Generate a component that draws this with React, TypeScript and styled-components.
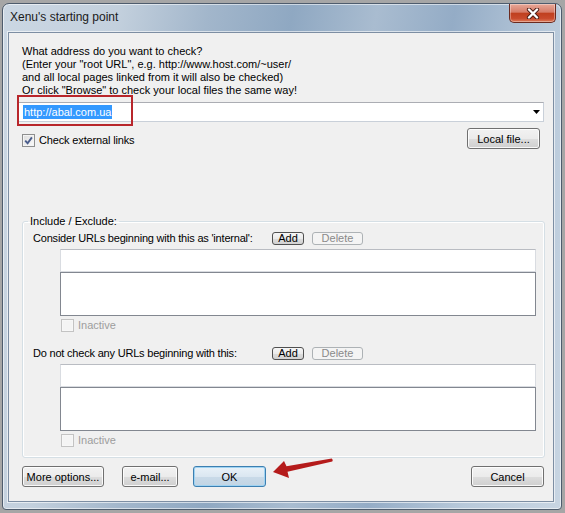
import React from "react";
import styled, { createGlobalStyle } from "styled-components";

const GlobalStyle = createGlobalStyle`
	html, body {
		margin: 0;
		padding: 0;
	}
	body {
		background: #a6a6a6;
		font-family: "Liberation Sans", Arial, sans-serif;
		font-size: 11px;
		color: #000;
	}
`;

const CheckMark = () => (
	<svg width="9" height="9" viewBox="0 0 9 9">
		<path d="M1.2 4.6 L3.6 7.2 L7.9 1.4" fill="none" stroke="#4a5d8c" strokeWidth="1.9" />
	</svg>
);

const Section = ({ label, first }: { label: string; first?: boolean }) => (
	<SectionBox $first={first}>
		<SectionHead>
			<span>{label}</span>
			<SmallButton>Add</SmallButton>
			<SmallButton $disabled>Delete</SmallButton>
		</SectionHead>
		<EntryInput />
		<EntryList />
		<InactiveRow>
			<CheckBox $disabled />
			<InactiveText>Inactive</InactiveText>
		</InactiveRow>
	</SectionBox>
);

const App = () => {
	return (
		<>
			<GlobalStyle />
			<Window>
				<TitleBar>
					<Title>Xenu's starting point</Title>
					<CloseButton>
						<svg width="14" height="11" viewBox="0 0 14 11">
							<path d="M3 1.5 L11 9.5 M11 1.5 L3 9.5" stroke="#4a1c14" strokeWidth="4.2" strokeLinecap="round" />
							<path d="M3 1.5 L11 9.5 M11 1.5 L3 9.5" stroke="#fff" strokeWidth="2.4" strokeLinecap="round" />
						</svg>
					</CloseButton>
				</TitleBar>
				<Client>
					<Prompt>
						<div>What address do you want to check?</div>
						<div>(Enter your "root URL", e.g. http://www.host.com/~user/</div>
						<div>and all local pages linked from it will also be checked)</div>
						<div>Or click "Browse" to check your local files the same way!</div>
					</Prompt>
					<ComboWrap>
						<Combo>
							<Selected>http://abal.com.ua</Selected>
							<DropArrow width="7" height="4" viewBox="0 0 7 4">
								<path d="M0 0 H7 L3.5 4 Z" fill="#000" />
							</DropArrow>
						</Combo>
						<Annotation />
					</ComboWrap>
					<CheckRow>
						<CheckLabel>
							<CheckBox>
								<CheckMark />
							</CheckBox>
							Check external links
						</CheckLabel>
						<Button $w={73}>Local file...</Button>
					</CheckRow>
					<Group>
						<Legend>Include / Exclude:</Legend>
						<Section first label="Consider URLs beginning with this as 'internal':" />
						<Section label="Do not check any URLs beginning with this:" />
					</Group>
					<ButtonRow>
						<Button $w={82}>More options...</Button>
						<Button $w={56} $ml={18}>
							e-mail...
						</Button>
						<Button $w={73} $ml={15} $default>
							OK
						</Button>
						<Button $w={73} $ml="auto">
							Cancel
						</Button>
						<Arrow width="66" height="26" viewBox="0 0 66 26">
							<path
								d="M3 16 L14 5 L16.5 10.3 L61.7 2.5 Q63.6 4 62.3 5.6 L17.5 15.7 L19 22 Z"
								fill="#b51b1b"
							/>
						</Arrow>
					</ButtonRow>
				</Client>
			</Window>
		</>
	);
};

export default App;

const Window = styled.div`
	box-sizing: border-box;
	width: 560px;
	height: 507px;
	margin: 3px 0 0 2px;
	padding: 0 7px 7px 5px;
	display: flex;
	flex-direction: column;
	border: 1px solid #4e5c6d;
	border-radius: 7px 7px 4px 4px;
	background: linear-gradient(
		100deg,
		#cbd7e3 0%,
		#c3d0dd 18%,
		#a2b6cb 32%,
		#8fa8c2 45%,
		#a9bcd0 58%,
		#94acc6 70%,
		#b8c9da 85%,
		#c8d5e2 100%
	);
	box-shadow: inset 0 0 0 1px rgba(255, 255, 255, 0.55);
`;

const TitleBar = styled.div`
	height: 28px;
	flex: none;
	display: flex;
	justify-content: space-between;
	align-items: flex-start;
`;

const Title = styled.div`
	padding: 5px 0 0 2px;
	font-size: 12px;
	line-height: 16px;
	color: #1a1a1a;
`;

const CloseButton = styled.div`
	box-sizing: border-box;
	width: 47px;
	height: 19px;
	margin-right: -2px;
	display: flex;
	align-items: center;
	justify-content: center;
	border: 1px solid #6b2a1f;
	border-top: none;
	border-radius: 0 0 5px 5px;
	background: linear-gradient(#e8a898 0%, #d67c68 45%, #c0401f 52%, #c84a2c 80%, #de7c5b 100%);
	box-shadow: inset 0 0 0 1px rgba(255, 255, 255, 0.35);
`;

const Client = styled.div`
	flex: 1;
	display: flex;
	flex-direction: column;
	background: #f0f0f0;
	border: 1px solid #7d8ea3;
	box-shadow: 0 0 0 1px rgba(255, 255, 255, 0.6);
`;

const Prompt = styled.div`
	margin: 12px 0 0 13px;
	line-height: 13px;
`;

const ComboWrap = styled.div`
	position: relative;
	margin: 5px 9px 0 8px;
`;

const Combo = styled.div`
	box-sizing: border-box;
	height: 20px;
	display: flex;
	align-items: center;
	padding: 0 3px 0 5px;
	background: #fff;
	border: 1px solid #c9d0d9;
	border-top-color: #abadb3;
`;

const Selected = styled.span`
	background: #3399ff;
	color: #fff;
	padding: 0 1px;
	line-height: 14px;
`;

const DropArrow = styled.svg`
	margin-left: auto;
`;

const Annotation = styled.div`
	position: absolute;
	left: 0;
	top: -7px;
	width: 116px;
	height: 31px;
	box-sizing: border-box;
	border: 2px solid #b8262b;
`;

const CheckRow = styled.div`
	margin: 6px 13px 0 13px;
	height: 21px;
	display: flex;
	justify-content: space-between;
	align-items: flex-start;
`;

const CheckLabel = styled.div`
	display: flex;
	align-items: center;
	gap: 4px;
	margin-top: 6px;
	line-height: 13px;
	letter-spacing: -0.15px;
`;

const CheckBox = styled.span<{ $disabled?: boolean }>`
	box-sizing: border-box;
	width: 13px;
	height: 13px;
	flex: none;
	display: inline-flex;
	align-items: center;
	justify-content: center;
	border: 1px solid ${(p) => (p.$disabled ? "#c3c3c3" : "#8e8f8f")};
	background: ${(p) => (p.$disabled ? "#f4f4f4" : "linear-gradient(135deg, #dcdcdc, #fbfbfb)")};
	box-shadow: inset 0 0 0 1px ${(p) => (p.$disabled ? "#f7f7f7" : "#f4f4f4")};
`;

interface IButton {
	$w: number;
	$ml?: number | "auto";
	$default?: boolean;
}

const Button = styled.button<IButton>`
	box-sizing: border-box;
	width: ${(p) => p.$w}px;
	height: 21px;
	margin: 0 0 0 ${(p) => (p.$ml === "auto" ? "auto" : `${p.$ml || 0}px`)};
	padding: 0;
	font: inherit;
	font-size: 11px;
	color: #000;
	flex: none;
	display: flex;
	align-items: center;
	justify-content: center;
	border: 1px solid ${(p) => (p.$default ? "#3c7fb1" : "#707070")};
	border-radius: 3px;
	background: ${(p) =>
		p.$default
			? "linear-gradient(#e8f1f8 0%, #dbe7f1 50%, #c9dae8 51%, #c2d5e4 100%)"
			: "linear-gradient(#f2f2f2 0%, #ebebeb 50%, #dddddd 51%, #cfcfcf 100%)"};
	box-shadow: inset 0 0 0 1px ${(p) => (p.$default ? "#9fd3f2" : "rgba(255, 255, 255, 0.85)")};
`;

const Group = styled.fieldset`
	margin: 66px 8px 0 13px;
	padding: 0 8px 10px 10px;
	min-width: 0;
	border: 1px solid #d5dfe5;
	border-radius: 3px;
	box-shadow: inset 0 0 0 1px #fff;
`;

const Legend = styled.legend`
	margin-left: -5px;
	padding: 0 2px;
	line-height: 13px;
`;

const SectionBox = styled.div<{ $first?: boolean }>`
	margin-top: ${(p) => (p.$first ? "4px" : "15px")};
	display: flex;
	flex-direction: column;
`;

const SectionHead = styled.div`
	display: grid;
	grid-template-columns: 231px 32px 51px;
	column-gap: 8px;
	align-items: center;
	height: 13px;
	line-height: 13px;

	span {
		letter-spacing: -0.2px;
		white-space: nowrap;
	}
`;

const SmallButton = styled.div<{ $disabled?: boolean }>`
	box-sizing: border-box;
	height: 13px;
	display: flex;
	align-items: center;
	justify-content: center;
	font-size: 11px;
	line-height: 11px;
	color: ${(p) => (p.$disabled ? "#8a8a8a" : "#000")};
	border: 1px solid ${(p) => (p.$disabled ? "#adb2b5" : "#505050")};
	border-radius: 3px;
	background: ${(p) =>
		p.$disabled ? "#f4f4f4" : "linear-gradient(#f6f6f6 0%, #ebebeb 50%, #dddddd 51%, #d2d2d2 100%)"};
`;

const EntryInput = styled.div`
	box-sizing: border-box;
	height: 23px;
	margin: 4px 0 0 27px;
	background: #fff;
	border: 1px solid #d9dce1;
	border-top-color: #b9bcc2;
`;

const EntryList = styled.div`
	box-sizing: border-box;
	height: 44px;
	margin-left: 27px;
	background: #fff;
	border: 1px solid #828790;
`;

const InactiveRow = styled.div`
	margin: 3px 0 0 28px;
	display: flex;
	align-items: center;
	gap: 4px;
	height: 13px;
	line-height: 13px;
`;

const InactiveText = styled.span`
	color: #9d9d9d;
`;

const ButtonRow = styled.div`
	position: relative;
	margin: 8px 9px 0 13px;
	display: flex;
	align-items: center;
`;

const Arrow = styled.svg`
	position: absolute;
	left: 248px;
	top: -10px;
`;
